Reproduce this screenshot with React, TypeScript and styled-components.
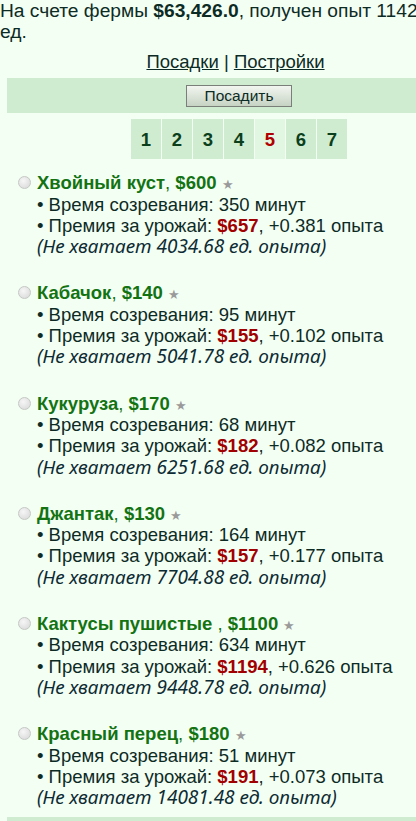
import React from "react";
import styled, { createGlobalStyle } from "styled-components";

interface ICrop {
  name: string;
  price: number;
  minutes: number;
  reward: number;
  exp: string;
  missing: string;
}

const crops: ICrop[] = [
  { name: "Хвойный куст", price: 600, minutes: 350, reward: 657, exp: "0.381", missing: "4034.68" },
  { name: "Кабачок", price: 140, minutes: 95, reward: 155, exp: "0.102", missing: "5041.78" },
  { name: "Кукуруза", price: 170, minutes: 68, reward: 182, exp: "0.082", missing: "6251.68" },
  { name: "Джантак", price: 130, minutes: 164, reward: 157, exp: "0.177", missing: "7704.88" },
  { name: "Кактусы пушистые ", price: 1100, minutes: 634, reward: 1194, exp: "0.626", missing: "9448.78" },
  { name: "Красный перец", price: 180, minutes: 51, reward: 191, exp: "0.073", missing: "14081.48" },
];

const pages = [1, 2, 3, 4, 5, 6, 7];

const GlobalStyle = createGlobalStyle`
  html, body {
    margin: 0;
    padding: 0;
    background: #f4fff4;
    overflow-x: hidden;
  }
  body {
    font-family: "Liberation Sans", Arial, sans-serif;
    font-size: 18.5px;
    line-height: 21.3px;
    color: #0d2b25;
  }
`;

const Farm = () => {
  return (
    <Page>
      <GlobalStyle />
      <Balance>
        На счете фермы <b>$63,426.0</b>, получен опыт 1142 ед.
      </Balance>
      <Nav>
        <NavLink href="#">Посадки</NavLink> | <NavLink href="#">Постройки</NavLink>
      </Nav>
      <ActionBar>
        <PlantButton>Посадить</PlantButton>
      </ActionBar>
      <Pager>
        {pages.map((p) => (
          <PageCell key={p} $active={p === 5}>
            {p}
          </PageCell>
        ))}
      </Pager>
      <CropList>
        {crops.map((crop) => (
          <CropItem key={crop.name}>
            <Radio type="radio" name="crop" />
            <CropInfo>
              <CropTitle>
                <b>{crop.name}</b>, <b>${crop.price}</b> <Star>★</Star>
              </CropTitle>
              <div>• Время созревания: {crop.minutes} минут</div>
              <div>
                • Премия за урожай: <Reward>${crop.reward}</Reward>, +{crop.exp} опыта
              </div>
              <Missing>(Не хватает {crop.missing} ед. опыта)</Missing>
            </CropInfo>
          </CropItem>
        ))}
      </CropList>
      <ActionBar />
    </Page>
  );
};

const Page = styled.div`
  width: 471px;
`;

const Balance = styled.div`
  width: 440px;
  font-size: 19.2px;
  line-height: 21px;
  b {
    font-weight: 700;
  }
`;

const Nav = styled.div`
  text-align: center;
  margin: 9px 0 6px;
`;

const NavLink = styled.a`
  color: #0d2b25;
  text-decoration: underline;
`;

const ActionBar = styled.div`
  background: #d0ecd0;
  margin-left: 7px;
  height: 35px;
  display: flex;
  align-items: center;
  justify-content: center;
`;

const PlantButton = styled.button`
  width: 106px;
  height: 22px;
  padding: 0;
  font-family: "Liberation Sans", Arial, sans-serif;
  font-size: 15.5px;
  line-height: 18px;
  color: #0d2b25;
  border: 1px solid #7a7f7a;
  background: linear-gradient(#f2f6f0, #c6d3c3);
  cursor: pointer;
`;

const Pager = styled.div`
  display: flex;
  justify-content: center;
  gap: 1px;
  margin: 6px 0 0 7px;
`;

const PageCell = styled.div<{ $active: boolean }>`
  width: 30px;
  height: 40px;
  display: flex;
  align-items: center;
  justify-content: center;
  font-weight: 700;
  font-size: 18.5px;
  background: ${(p) => (p.$active ? "#e2f7e2" : "#d0ecd0")};
  color: ${(p) => (p.$active ? "#b00000" : "#0b3f1c")};
`;

const CropList = styled.div`
  display: flex;
  flex-direction: column;
  gap: 25px;
  margin: 13px 0 9px;
`;

const CropItem = styled.div`
  display: flex;
  align-items: flex-start;
  padding-left: 18px;
`;

const Radio = styled.input`
  appearance: none;
  width: 13px;
  height: 13px;
  margin: 4px 6px 0 0;
  flex-shrink: 0;
  border-radius: 50%;
  border: 1px solid #c4c8c4;
  background: radial-gradient(circle at 40% 35%, #f6f6f6, #d6d6d6);
  box-sizing: border-box;
`;

const CropInfo = styled.div`
  display: flex;
  flex-direction: column;
`;

const CropTitle = styled.div`
  color: #137313;
  b {
    font-weight: 700;
  }
`;

const Star = styled.span`
  color: #9a9a9a;
  font-size: 13px;
  line-height: 0;
`;

const Reward = styled.b`
  color: #a00000;
`;

const Missing = styled.i`
  font-family: "Noto Sans", "Liberation Sans", sans-serif;
  font-size: 19px;
  color: #0d2b33;
`;

export default Farm;
